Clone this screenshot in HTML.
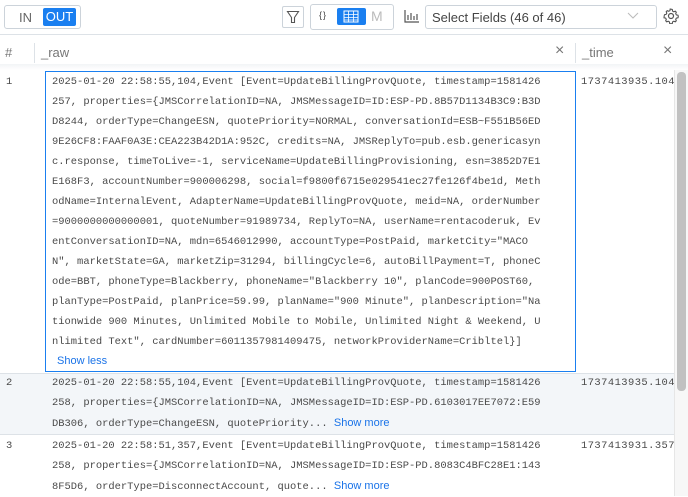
<!DOCTYPE html>
<html><head><meta charset="utf-8"><style>
*{margin:0;padding:0;box-sizing:border-box}
body{width:688px;height:496px;overflow:hidden;background:#fff;font-family:"Liberation Sans",sans-serif;position:relative;color:#555}
.a{position:absolute}
.mono{font-family:"Liberation Mono",monospace;font-size:10.45px;color:#4a4a4a;white-space:pre;line-height:20px}
.lnk{font-family:"Liberation Sans",sans-serif;color:#1a73e8;font-size:11px}
.tm{overflow:hidden;width:93px;letter-spacing:0.45px}
</style></head><body>
<!-- toolbar -->
<div class="a" style="left:4px;top:5px;width:77px;height:24px;border:1px solid #ccd3da;border-radius:3px"></div>
<div class="a" style="left:19px;top:10px;font-size:13px;color:#666">IN</div>
<div class="a" style="left:43px;top:8px;width:33px;height:18px;background:#1a7ff0;border-radius:2px;color:#fff;font-size:13px;text-align:center;line-height:18px">OUT</div>
<div class="a" style="left:282px;top:6px;width:22px;height:22px;border:1px solid #ccd3da;border-radius:2px"></div>
<svg class="a" style="left:286px;top:10px" width="14" height="14" viewBox="0 0 14 14"><path d="M1.5 1.5h11l-4 6v5h-3v-5z" fill="none" stroke="#555" stroke-width="1.1"/></svg>
<div class="a" style="left:310px;top:4px;width:84px;height:26px;border:1px solid #ccd3da;border-radius:3px"></div>
<div class="a" style="left:319px;top:10px;font-size:9px;color:#444;letter-spacing:1px">{}</div>
<div class="a" style="left:337px;top:8px;width:29px;height:17px;background:#1a7ff0;border-radius:2px"></div>
<svg class="a" style="left:343px;top:10px" width="16" height="13" viewBox="0 0 16 13"><rect x="1" y="1" width="14" height="11" fill="none" stroke="#fff"/><path d="M1 4.5h14M1 7.5h14M1 10h14M5.5 1v11M10.5 1v11" stroke="#fff" stroke-width="0.8"/></svg>
<div class="a" style="left:371px;top:8px;font-size:14px;color:#bbb">M</div>
<svg class="a" style="left:404px;top:9px" width="16" height="14" viewBox="0 0 16 14"><path d="M1 1v12h14M4 11V6M7 11V4M10 11V7M13 11V5" stroke="#555" stroke-width="1.2" fill="none"/></svg>
<div class="a" style="left:425px;top:5px;width:232px;height:24px;border:1px solid #ccd3da;border-radius:3px"></div>
<div class="a" style="left:432px;top:10px;font-size:13px;color:#444">Select Fields (46 of 46)</div>
<svg class="a" style="left:627px;top:12px" width="12" height="8"><path d="M1 1l5 5 5-5" fill="none" stroke="#bbb"/></svg>
<svg class="a" style="left:663px;top:8px" width="16" height="16" viewBox="0 0 16 16"><circle cx="8" cy="8" r="2.5" fill="none" stroke="#555" stroke-width="1.2"/><path d="M8 1.2l1.3.3.3 1.6 1.2.7 1.5-.6 1 1-.6 1.5.7 1.2 1.6.3.3 1.3-.3 1.3-1.6.3-.7 1.2.6 1.5-1 1-1.5-.6-1.2.7-.3 1.6-1.3.3-1.3-.3-.3-1.6-1.2-.7-1.5.6-1-1 .6-1.5-.7-1.2-1.6-.3L1.2 8l.3-1.3 1.6-.3.7-1.2-.6-1.5 1-1 1.5.6 1.2-.7.3-1.6z" fill="none" stroke="#555" stroke-width="1.1"/></svg>
<div class="a" style="left:0;top:34px;width:688px;height:1px;background:#dde2e7"></div>
<!-- header -->
<div class="a" style="left:5px;top:45px;font-size:13px;color:#777">#</div>
<div class="a" style="left:34px;top:43px;width:1px;height:20px;background:#dde2e7"></div>
<div class="a" style="left:41px;top:45px;font-size:13px;color:#777">_raw</div>
<div class="a" style="left:555px;top:42px;font-size:16px;color:#777">×</div>
<div class="a" style="left:575px;top:43px;width:1px;height:20px;background:#dde2e7"></div>
<div class="a" style="left:582px;top:45px;font-size:13px;color:#777">_time</div>
<div class="a" style="left:663px;top:42px;font-size:16px;color:#777">×</div>
<div class="a" style="left:0;top:64px;width:688px;height:6px;background:linear-gradient(#f2f4f6,#fff)"></div>
<!-- scrollbar -->
<div class="a" style="left:674px;top:70px;width:14px;height:426px;background:#f7f7f7;border-left:1px solid #e6e6e6"></div>
<div class="a" style="left:677px;top:72px;width:9px;height:319px;background:#c1c1c1;border-radius:4px"></div>
<!-- row1 -->
<div class="a mono" style="left:6px;top:72px">1</div>
<div class="a" style="left:45px;top:71px;width:531px;height:301px;outline:1px solid #1a7ff0;outline-offset:-1px"></div>
<div class="a mono" style="left:52px;top:72px">2025-01-20 22:58:55,104,Event [Event=UpdateBillingProvQuote, timestamp=1581426
257, properties={JMSCorrelationID=NA, JMSMessageID=ID:ESP-PD.8B57D1134B3C9:B3D
D8244, orderType=ChangeESN, quotePriority=NORMAL, conversationId=ESB~F551B56ED
9E26CF8:FAAF0A3E:CEA223B42D1A:952C, credits=NA, JMSReplyTo=pub.esb.genericasyn
c.response, timeToLive=-1, serviceName=UpdateBillingProvisioning, esn=3852D7E1
E168F3, accountNumber=900006298, social=f9800f6715e029541ec27fe126f4be1d, Meth
odName=InternalEvent, AdapterName=UpdateBillingProvQuote, meid=NA, orderNumber
=9000000000000001, quoteNumber=91989734, ReplyTo=NA, userName=rentacoderuk, Ev
entConversationID=NA, mdn=6546012990, accountType=PostPaid, marketCity="MACO
N", marketState=GA, marketZip=31294, billingCycle=6, autoBillPayment=T, phoneC
ode=BBT, phoneType=Blackberry, phoneName="Blackberry 10", planCode=900POST60,
planType=PostPaid, planPrice=59.99, planName="900 Minute", planDescription="Na
tionwide 900 Minutes, Unlimited Mobile to Mobile, Unlimited Night &amp; Weekend, U
nlimited Text", cardNumber=6011357981409475, networkProviderName=Cribltel}]</div>
<div class="a lnk" style="left:57px;top:355px">Show less</div>
<div class="a mono tm" style="left:581px;top:72px">1737413935.104</div>
<!-- row2 -->
<div class="a" style="left:0;top:373px;width:674px;height:62px;background:#f3f6f9;border-top:1px solid #dde2e7;border-bottom:1px solid #dde2e7"></div>
<div class="a mono" style="left:6px;top:373px">2</div>
<div class="a mono" style="left:52px;top:373px">2025-01-20 22:58:55,104,Event [Event=UpdateBillingProvQuote, timestamp=1581426
258, properties={JMSCorrelationID=NA, JMSMessageID=ID:ESP-PD.6103017EE7072:E59
DB306, orderType=ChangeESN, quotePriority... <span class="lnk">Show more</span></div>
<div class="a mono tm" style="left:581px;top:373px">1737413935.104</div>
<!-- row3 -->
<div class="a mono" style="left:6px;top:436px">3</div>
<div class="a mono" style="left:52px;top:436px">2025-01-20 22:58:51,357,Event [Event=UpdateBillingProvQuote, timestamp=1581426
258, properties={JMSCorrelationID=NA, JMSMessageID=ID:ESP-PD.8083C4BFC28E1:143
8F5D6, orderType=DisconnectAccount, quote... <span class="lnk">Show more</span></div>
<div class="a mono tm" style="left:581px;top:436px">1737413931.357</div>
</body></html>
